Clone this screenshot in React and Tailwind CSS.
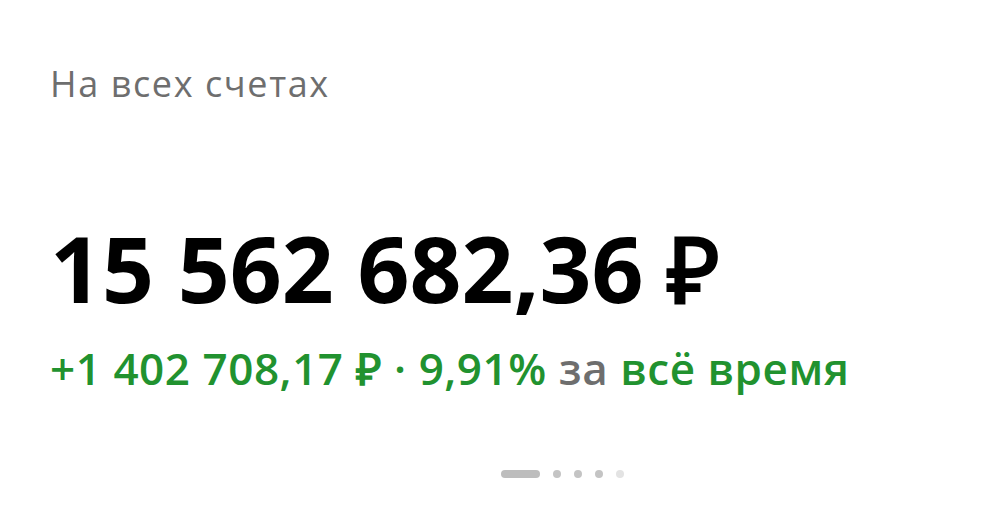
export default function App() {
    return (
        <div className="w-[1005px] h-[507px] bg-white overflow-hidden" style={{ fontFamily: '"Open Sans", sans-serif' }}>
            <div className="pl-[50px]">
                <p className="pt-[66px] text-[36px] leading-[36px] text-[#6e6e6e] tracking-[1.6px]">На всех счетах</p>
                <p className="mt-[121px] text-[91px] leading-[91px] font-bold text-black">15 562 682,36 ₽</p>
                <p className="mt-[32px] text-[44px] leading-[44px] font-semibold text-[#21922f] tracking-[0.55px]">
                    +1 402 708,17 ₽ · 9,91% <span className="text-[#6e6e6e]">за</span> всё время
                </p>
            </div>
            {/* pager dots */}
            <div className="mt-[80px] pl-[501px] flex items-center gap-[13px]">
                <div className="w-[39px] h-2 rounded-full bg-[#bdbdbd]"></div>
                <div className="w-2 h-2 rounded-full bg-[#c4c4c4]"></div>
                <div className="w-2 h-2 rounded-full bg-[#c4c4c4]"></div>
                <div className="w-2 h-2 rounded-full bg-[#c4c4c4]"></div>
                <div className="w-2 h-2 rounded-full bg-[#e3e3e3]"></div>
            </div>
        </div>
    );
}
